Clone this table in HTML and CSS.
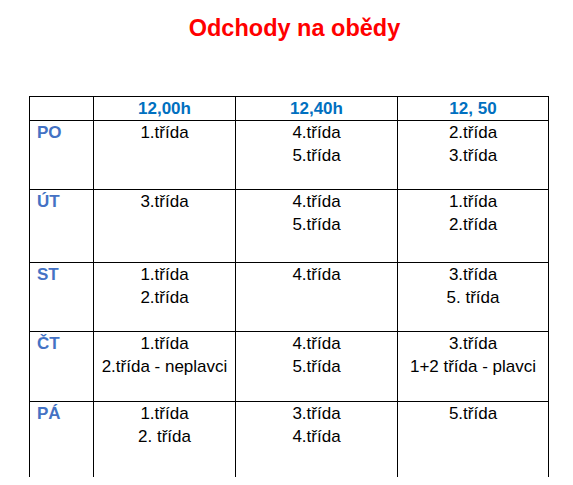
FILE: index.html
```html
<!DOCTYPE html>
<html lang="cs">
<head>
<meta charset="utf-8">
<title>Odchody na obědy</title>
<link rel="stylesheet" href="styles.css">
</head>
<body>
<h1 class="title">Odchody na obědy</h1>
<table class="schedule">
  <colgroup>
    <col class="c-day">
    <col class="c-1">
    <col class="c-2">
    <col class="c-3">
  </colgroup>
  <tr class="r-head">
    <td></td>
    <td class="time">12,00h</td>
    <td class="time">12,40h</td>
    <td class="time">12, 50</td>
  </tr>
  <tr class="r-po">
    <td class="day">PO</td>
    <td>1.třída</td>
    <td>4.třída<br>5.třída</td>
    <td>2.třída<br>3.třída</td>
  </tr>
  <tr class="r-ut">
    <td class="day">ÚT</td>
    <td>3.třída</td>
    <td>4.třída<br>5.třída</td>
    <td>1.třída<br>2.třída</td>
  </tr>
  <tr class="r-st">
    <td class="day">ST</td>
    <td>1.třída<br>2.třída</td>
    <td>4.třída</td>
    <td>3.třída<br>5. třída</td>
  </tr>
  <tr class="r-ct">
    <td class="day">ČT</td>
    <td>1.třída<br>2.třída - neplavci</td>
    <td>4.třída<br>5.třída</td>
    <td>3.třída<br>1+2 třída - plavci</td>
  </tr>
  <tr class="r-pa">
    <td class="day">PÁ</td>
    <td>1.třída<br>2. třída</td>
    <td>3.třída<br>4.třída</td>
    <td>5.třída</td>
  </tr>
</table>
</body>
</html>
```
FILE: styles.css
```css
html, body {
  margin: 0;
  padding: 0;
  background: #fff;
}
body {
  font-family: "Liberation Sans", Arial, sans-serif;
  color: #000;
}
.title {
  margin: 0;
  padding: 14px 0 0 16px;
  height: 28px;
  line-height: 28px;
  font-size: 23.5px;
  font-weight: bold;
  color: #ff0000;
  text-align: center;
}
.schedule {
  margin: 54px 0 0 29px;
  border-collapse: collapse;
  table-layout: fixed;
  width: 519px;
  font-size: 17px;
  line-height: 23px;
}
.c-day { width: 64px; }
.c-1 { width: 142px; }
.c-2 { width: 162px; }
.c-3 { width: 151px; }
.schedule td {
  box-sizing: border-box;
  border: 1px solid #000;
  padding: 0;
  vertical-align: top;
  text-align: center;
  white-space: nowrap;
}
.schedule .time {
  color: #0070c0;
  font-weight: bold;
}
.schedule .day {
  text-align: left;
  padding-left: 7px;
  color: #4472c4;
  font-weight: bold;
}
.r-head td { height: 23px; }
.r-po td { height: 69px; }
.r-ut td { height: 73px; }
.r-st td { height: 69px; }
.r-ct td { height: 70px; }
.r-pa td { height: 75px; border-bottom: none; }
```
